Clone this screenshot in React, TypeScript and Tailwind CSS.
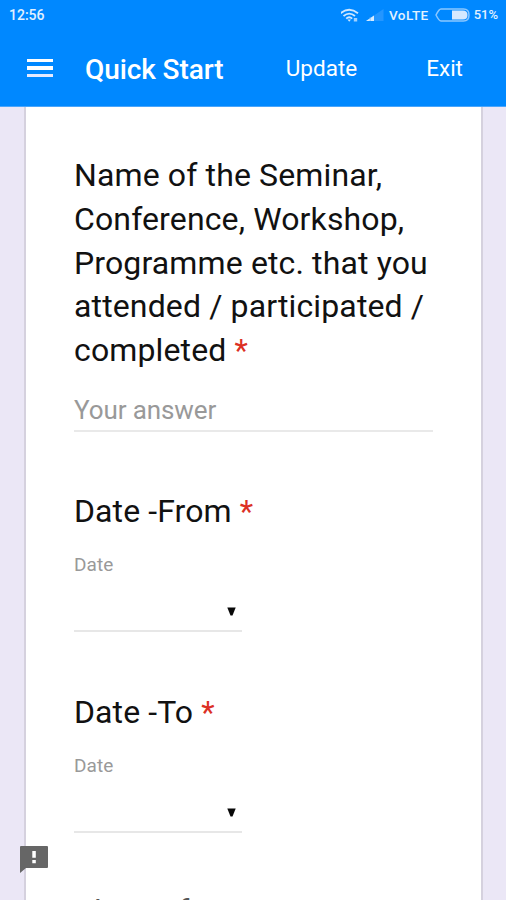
function WifiIcon() {
  return (
    <svg className="h-[15px] w-[20px]" viewBox="0 0 20 15" fill="none" stroke="#cfe7ff" strokeWidth="1.8">
      <path d="M-.5 5.2Q8.2-1.6 17 5.2" />
      <path d="M2.5 8Q8.2 3.2 14 8" />
      <path d="M5.2 10.6Q8.2 7.8 11.2 10.6" />
      <path d="M6.4 11.4H10l-1.8 2.4z" fill="#cfe7ff" stroke="none" />
      <path d="M12.8 10v3.5h3.4V10z" fill="#9fd0ff" stroke="none" />
    </svg>
  );
}

function SignalIcon() {
  return (
    <svg className="h-[13px] w-[18px]" viewBox="0 0 18 13">
      <path d="M0 12L17.5 0V12z" fill="#2496ff" />
      <path d="M0 12L8 6.5V12z" fill="#d8ecff" />
      <path d="M4.2 8v4" stroke="#68b7ff" strokeWidth=".7" />
    </svg>
  );
}

function BatteryIcon() {
  return (
    <svg className="h-[14px] w-[35px]" viewBox="0 0 35 14">
      <path d="M6 1h22.5q5.5 0 5.5 6t-5.5 6H6Q4 13 1 7Q4 1 6 1z" fill="none" stroke="#8bc7ff" strokeWidth="1.5" />
      <path d="M17 2.5h11q4.5 0 4.5 4.5t-4.5 4.5H17z" fill="#d5e9ff" />
    </svg>
  );
}

function Required() {
  return <span className="text-[31px] leading-none text-[#dc3025]">*</span>;
}

function DateQuestion({ title }: { title: string }) {
  return (
    <section className="h-[201px]">
      <h2 className="h-[44px] text-[32px] leading-[44px] tracking-[0.1px]">
        {title} <Required />
      </h2>
      <p className="mt-[20px] text-[19px] leading-6 tracking-[0.1px] text-[#999]">Date</p>
      <div className="flex h-[55px] w-[168px] items-center justify-end border-b-2 border-[#e7e7e7] pt-[15px] pr-[6px]">
        <svg className="h-[9px] w-[9px]" viewBox="0 0 9 9">
          <path d="M.3.5h8.4L5.5 8.5h-2z" fill="#080808" />
        </svg>
      </div>
    </section>
  );
}

export default function App() {
  return (
    <div className="relative flex h-[900px] w-[506px] flex-col overflow-hidden bg-[#ebe7f6] font-['Roboto',sans-serif] text-[#111]">
      <header className="h-[107px] shrink-0 border-b border-[#4aa5fb] bg-[#0088ff] text-white">
        <div className="flex h-[30px] items-center pr-[8px] pl-[9px] text-[13px] font-medium text-[#e2f1ff]">
          <span className="text-[14px]">12:56</span>
          <div className="ml-auto flex items-center">
            <WifiIcon />
            <span className="ml-[5px]"><SignalIcon /></span>
            <span className="ml-[5px] text-[13.5px] tracking-[0.4px]">VoLTE</span>
            <span className="ml-[6px]"><BatteryIcon /></span>
            <span className="ml-[4px]">51%</span>
          </div>
        </div>
        <div className="flex h-[77px] items-center pr-[43px] pb-[1px] pl-[27px]">
          <div className="flex w-[26px] flex-col gap-[4px]">
            <div className="h-[3.5px] bg-white" />
            <div className="h-[3.5px] bg-white" />
            <div className="h-[3.5px] bg-[#e4eaff]" />
          </div>
          <span className="mt-[3px] ml-[32px] text-[28px] font-medium tracking-[-0.1px]">Quick Start</span>
          <span className="mt-[1px] ml-auto text-[22.5px]">Update</span>
          <span className="mt-[1px] ml-[69px] text-[22.5px]">Exit</span>
        </div>
      </header>
      <main className="mr-[23px] ml-[24px] h-[793px] overflow-hidden border-x-2 border-[#d5d1de] bg-white pt-[47px] pr-[40px] pl-[48px]">
        <section className="h-[335px]">
          <h2 className="h-[219px] text-[32px] leading-[43.75px] tracking-[0.13px] whitespace-nowrap">
            Name of the Seminar,<br />
            Conference, Workshop,<br />
            Programme etc. that you<br />
            attended / participated /<br />
            completed <Required />
          </h2>
          <div className="mt-[17px] flex h-[42px] w-[359px] items-center border-b-2 border-[#e9e9e9] text-[26px] tracking-[-0.1px] text-[#999]">
            Your answer
          </div>
        </section>
        <DateQuestion title="Date -From" />
        <DateQuestion title="Date -To" />
        <h2 className="-mt-[2px] text-[31.5px] leading-[45px] tracking-[0.1px] text-[#555]">Place of</h2>
      </main>
      <svg className="absolute top-[845px] left-[20px] h-[29px] w-[29px]" viewBox="0 0 29 29">
        <path d="M1 1h26q1 0 1 1v20q0 1-1 1H6L0 28V2q0-1 1-1z" fill="#666" />
        <path d="M12.3 6h3.5v6.8h-3.5zM12.3 15h3.5v3.3h-3.5z" fill="#fff" />
      </svg>
    </div>
  );
}
